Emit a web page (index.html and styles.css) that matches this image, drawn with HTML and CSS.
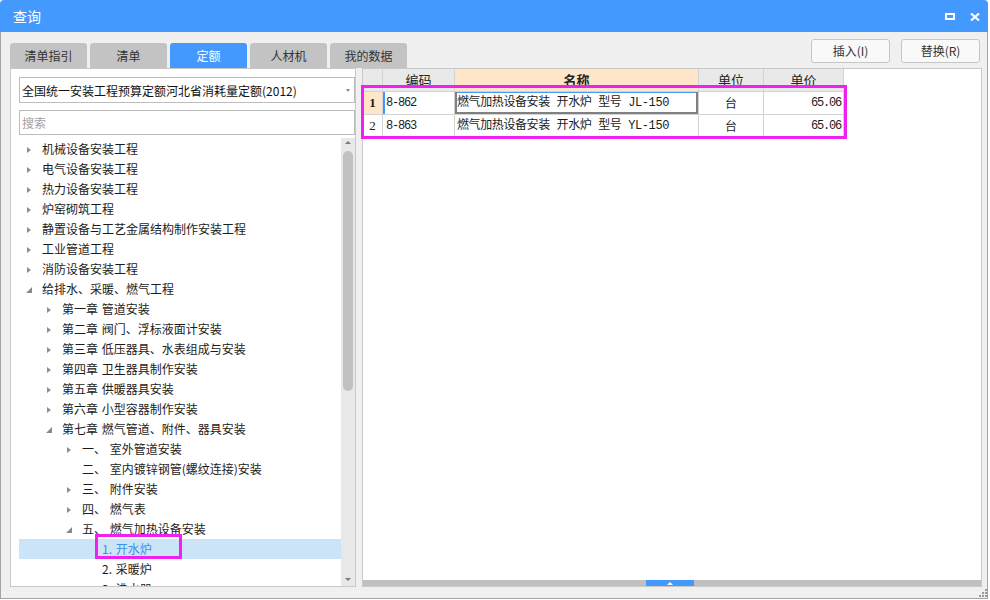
FILE: index.html
```html
<!DOCTYPE html>
<html lang="zh-CN">
<head>
<meta charset="utf-8">
<title>查询</title>
<link rel="stylesheet" href="styles.css">
</head>
<body>
<div class="window">
  <div class="titlebar">
    <div class="title">查询</div>
    <div class="winbtns">
      <svg width="10" height="7" viewBox="0 0 10 7"><rect x="1" y="1" width="8" height="5" fill="none" stroke="#fff" stroke-width="2"/></svg>
      <svg width="10" height="8" viewBox="0 0 10 8"><path d="M1 0.5 L9 7.5 M9 0.5 L1 7.5" stroke="#fff" stroke-width="2.2" fill="none"/></svg>
    </div>
  </div>
  <div class="body">
    <div class="topbar">
      <div class="tabs">
        <div class="tab">清单指引</div>
        <div class="tab">清单</div>
        <div class="tab active">定额</div>
        <div class="tab">人材机</div>
        <div class="tab">我的数据</div>
      </div>
      <div class="spacer"></div>
      <div class="actions">
        <div class="btn">插入(I)</div>
        <div class="btn">替换(R)</div>
      </div>
    </div>
    <div class="main">
      <div class="left">
        <div class="select">
          <span class="select-text">全国统一安装工程预算定额河北省消耗量定额(2012)</span>
          <span class="caret"></span>
        </div>
        <div class="search">搜索</div>
        <div class="tree-area">
          <div class="tree">
            <div class="row l0"><span class="tw c"></span>机械设备安装工程</div>
            <div class="row l0"><span class="tw c"></span>电气设备安装工程</div>
            <div class="row l0"><span class="tw c"></span>热力设备安装工程</div>
            <div class="row l0"><span class="tw c"></span>炉窑砌筑工程</div>
            <div class="row l0"><span class="tw c"></span>静置设备与工艺金属结构制作安装工程</div>
            <div class="row l0"><span class="tw c"></span>工业管道工程</div>
            <div class="row l0"><span class="tw c"></span>消防设备安装工程</div>
            <div class="row l0"><span class="tw e"></span>给排水、采暖、燃气工程</div>
            <div class="row l1"><span class="tw c"></span>第一章 管道安装</div>
            <div class="row l1"><span class="tw c"></span>第二章 阀门、浮标液面计安装</div>
            <div class="row l1"><span class="tw c"></span>第三章 低压器具、水表组成与安装</div>
            <div class="row l1"><span class="tw c"></span>第四章 卫生器具制作安装</div>
            <div class="row l1"><span class="tw c"></span>第五章 供暖器具安装</div>
            <div class="row l1"><span class="tw c"></span>第六章 小型容器制作安装</div>
            <div class="row l1"><span class="tw e"></span>第七章 燃气管道、附件、器具安装</div>
            <div class="row l2"><span class="tw c"></span>一、 室外管道安装</div>
            <div class="row l2"><span class="tw"></span>二、 室内镀锌钢管(螺纹连接)安装</div>
            <div class="row l2"><span class="tw c"></span>三、 附件安装</div>
            <div class="row l2"><span class="tw c"></span>四、 燃气表</div>
            <div class="row l2"><span class="tw e"></span>五、 燃气加热设备安装</div>
            <div class="row l3 sel"><span class="tw"></span>1. 开水炉</div>
            <div class="row l3"><span class="tw"></span>2. 采暖炉</div>
            <div class="row l3"><span class="tw"></span>3. 沸水器</div>
          </div>
          <div class="vscroll">
            <span class="arr-up"></span>
            <span class="thumb"></span>
            <span class="vspacer"></span>
            <span class="arr-down"></span>
          </div>
        </div>
      </div>
      <div class="right">
        <div class="grid">
          <div class="cell hd"></div>
          <div class="cell hd">编码</div>
          <div class="cell hd hname">名称</div>
          <div class="cell hd">单位</div>
          <div class="cell hd">单价</div>

          <div class="cell rn cur">1</div>
          <div class="cell code focus">8-862</div>
          <div class="cell nm selcell">燃气加热设备安装 开水炉 型号 JL-150</div>
          <div class="cell unit">台</div>
          <div class="cell price">65.06</div>

          <div class="cell rn">2</div>
          <div class="cell code">8-863</div>
          <div class="cell nm">燃气加热设备安装 开水炉 型号 YL-150</div>
          <div class="cell unit">台</div>
          <div class="cell price">65.06</div>
        </div>
        <div class="rspacer"></div>
        <div class="hbar"><span class="handle"><span class="handle-arr"></span></span></div>
      </div>
    </div>
    <div class="statusbar">
      <svg class="grip" width="8" height="8" viewBox="0 0 8 8">
        <rect x="6" y="0" width="2" height="2" fill="#9b9b9b"/>
        <rect x="3" y="3" width="2" height="2" fill="#9b9b9b"/>
        <rect x="6" y="3" width="2" height="2" fill="#9b9b9b"/>
        <rect x="0" y="6" width="2" height="2" fill="#9b9b9b"/>
        <rect x="3" y="6" width="2" height="2" fill="#9b9b9b"/>
        <rect x="6" y="6" width="2" height="2" fill="#9b9b9b"/>
      </svg>
    </div>
  </div>
  <div class="mark mark-table"></div>
  <div class="mark mark-tree"></div>
</div>
</body>
</html>
```

FILE: styles.css
```css
* { box-sizing: border-box; }
html, body { margin: 0; padding: 0; background: #ffffff; }
body {
  font-family: "Noto Sans CJK SC", "Noto Sans", sans-serif;
  font-size: 12px;
  color: #1c1c1c;
}
.window {
  position: relative;
  width: 988px;
  height: 599px;
  display: flex;
  flex-direction: column;
  border-radius: 4px 4px 0 0;
  overflow: hidden;
}
.titlebar {
  height: 32px;
  flex: none;
  background: #4499ff;
  color: #fff;
  display: flex;
  align-items: center;
  padding: 0 8px 0 13px;
  font-size: 14px;
}
.title { flex: 1; line-height: 32px; }
.winbtns { display: flex; align-items: center; gap: 15px; padding-top: 1px; }
.winbtns svg { display: block; }

.body {
  flex: 1;
  display: flex;
  flex-direction: column;
  background: #f0f0f0;
  border: 1px solid #a3a3a3;
  border-top: 0;
}
.topbar {
  height: 36px;
  flex: none;
  display: flex;
  padding: 0 7px 0 9px;
}
.tabs { display: flex; gap: 3px; align-self: flex-end; }
.tab {
  width: 77px;
  height: 25px;
  background: #c3c3c3;
  border-radius: 3px 3px 0 0;
  text-align: center;
  line-height: 25px;
  color: #333;
}
.tab.active { background: #4499ff; color: #fff; }
.spacer { flex: 1; }
.actions { display: flex; gap: 11px; margin-top: 7px; }
.btn {
  width: 79px;
  height: 24px;
  border: 1px solid #c6c6c6;
  border-radius: 3px;
  background: #f9f9f9;
  text-align: center;
  line-height: 22px;
  color: #333;
}

.main {
  height: 519px;
  flex: none;
  display: flex;
  gap: 6px;
  padding: 0 5px 0 9px;
}
.left {
  width: 346px;
  flex: none;
  border: 1px solid #c8c8c8;
  background: #fff;
  display: flex;
  flex-direction: column;
  min-height: 0;
}
.select {
  margin: 8px 0 0 8px;
  height: 26px;
  flex: none;
  border: 1px solid #bdbdbd;
  display: flex;
  align-items: center;
  padding: 0 4px 0 2px;
  color: #111;
}
.select-text { flex: 1; white-space: nowrap; }
.caret {
  width: 0;
  height: 0;
  border-top: 3px solid #8a8a8a;
  border-left: 2.5px solid transparent;
  border-right: 2.5px solid transparent;
  margin-right: 0;
}
.search {
  margin: 7px 0 0 8px;
  height: 25px;
  flex: none;
  border: 1px solid #bdbdbd;
  padding-left: 2px;
  line-height: 23px;
  color: #a2a2a2;
}
.tree-area {
  margin-top: 3px;
  flex: 1;
  min-height: 0;
  display: flex;
  overflow: hidden;
}
.tree {
  flex: 1;
  padding: 1px 0 0 8px;
  overflow: hidden;
}
.row {
  height: 20px;
  line-height: 20px;
  display: flex;
  align-items: center;
  white-space: nowrap;
  word-spacing: 1px;
}
.row.l0 { padding-left: 8px; }
.row.l1 { padding-left: 28px; }
.row.l2 { padding-left: 48px; }
.row.l3 { padding-left: 68px; }
.row.sel { background: #cce4f8; color: #3d8fe8; }
.tw {
  width: 15px;
  height: 20px;
  flex: none;
  display: flex;
  align-items: center;
}
.tw.c::before {
  content: "";
  display: block;
  width: 0;
  height: 0;
  border-left: 4px solid #8e8e8e;
  border-top: 3.5px solid transparent;
  border-bottom: 3.5px solid transparent;
  margin-top: 1px;
}
.tw.e::before {
  content: "";
  display: block;
  width: 0;
  height: 0;
  border-bottom: 6px solid #8a8a8a;
  border-left: 6px solid transparent;
  margin-left: -1px;
  margin-top: 2px;
}
.vscroll {
  width: 14px;
  flex: none;
  background: #e8e8e8;
  display: flex;
  flex-direction: column;
  align-items: center;
  padding: 3px 0 5px;
}
.arr-up {
  width: 0; height: 0;
  border-bottom: 3px solid #7a7a7a;
  border-left: 3px solid transparent;
  border-right: 3px solid transparent;
}
.arr-down {
  width: 0; height: 0;
  border-top: 3px solid #7a7a7a;
  border-left: 3px solid transparent;
  border-right: 3px solid transparent;
}
.thumb {
  width: 10px;
  height: 240px;
  margin-top: 7px;
  background: #c1c1c1;
  border-radius: 5px;
}
.vspacer { flex: 1; }

.right {
  width: 620px;
  flex: none;
  border: 1px solid #c8c8c8;
  background: #fff;
  display: flex;
  flex-direction: column;
}
.grid {
  display: grid;
  grid-template-columns: 20px 72px 244px 65px 80px;
  width: 481px;
}
.cell {
  height: 23px;
  line-height: 22px;
  border-right: 1px solid #d3d3d3;
  border-bottom: 1px solid #d3d3d3;
  white-space: nowrap;
  overflow: hidden;
}
.hd {
  background: #e9e9e9;
  text-align: center;
  font-size: 13px;
  color: #222;
}
.hd.hname { background: #ffe6c9; font-weight: bold; }
.rn {
  text-align: center;
  font-family: "Liberation Serif", serif;
  font-size: 13px;
}
.rn.cur { background: #ffe6c9; font-weight: bold; }
.code {
  padding-left: 3px;
  font-family: "Liberation Mono", monospace;
  letter-spacing: -1.2px;
}
.code.focus { box-shadow: inset 2px 0 0 #4499ff; }
.nm {
  padding-left: 2px;
  font-family: "Liberation Mono", "Noto Sans CJK SC", monospace;
  letter-spacing: -0.4px;
}
.selcell {
  box-shadow: inset 2px 0 0 #808080, inset -2px 0 0 #808080, inset 0 -2px 0 #808080, inset 0 1px 0 #4499ff;
}
.unit { text-align: center; }
.price {
  text-align: right;
  padding-right: 2px;
  font-family: "Liberation Mono", monospace;
  letter-spacing: -1.2px;
}
.rspacer { flex: 1; }
.hbar {
  height: 6px;
  flex: none;
  background: #c0c0c0;
  display: flex;
}
.handle {
  margin-left: 283px;
  width: 48px;
  height: 6px;
  background: #4499ff;
  display: flex;
  justify-content: center;
  align-items: center;
}
.handle-arr {
  width: 0; height: 0;
  border-bottom: 3px solid #fff;
  border-left: 3px solid transparent;
  border-right: 3px solid transparent;
}
.statusbar {
  flex: 1;
  display: flex;
  justify-content: flex-end;
  align-items: flex-end;
  padding: 0 0 1px 0;
}
.grip { display: block; }

.mark {
  position: absolute;
  border: 3px solid #f020f0;
  pointer-events: none;
}
.mark-table { left: 361px; top: 85px; width: 486px; height: 54px; }
.mark-tree { left: 95px; top: 534px; width: 87px; height: 25px; }
```
